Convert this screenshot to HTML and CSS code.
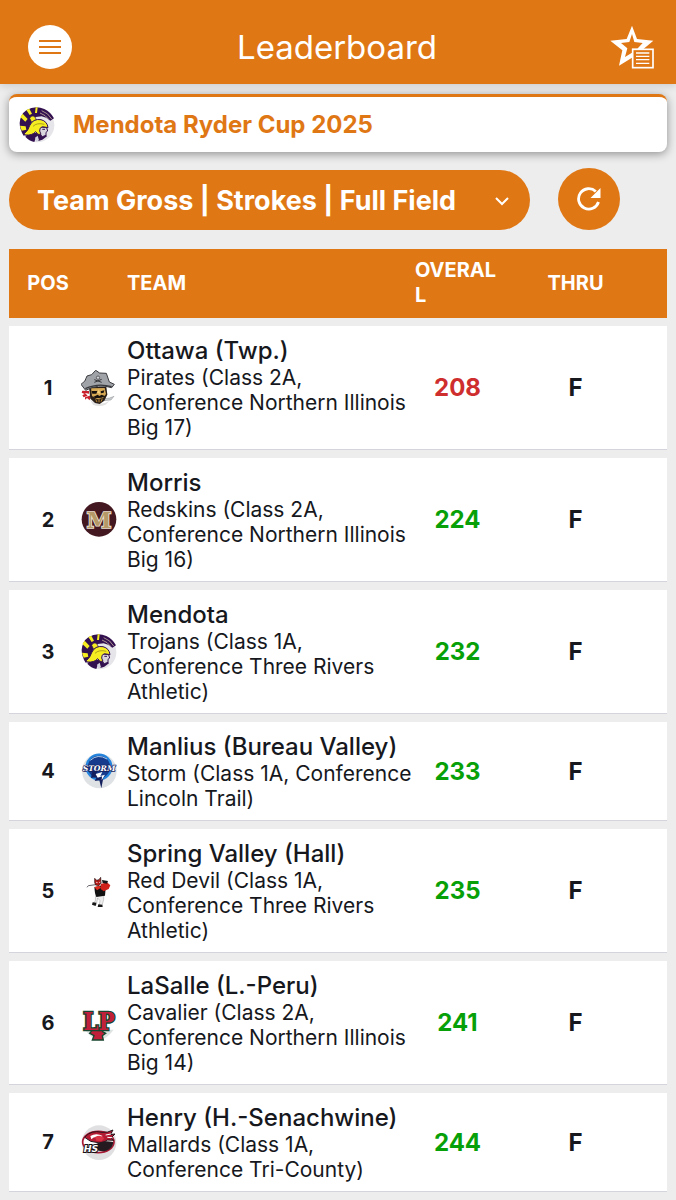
FILE: index.html
```html
<!DOCTYPE html>
<html lang="en">

<head>
    <meta charset="UTF-8">
    <meta name="viewport" content="width=device-width, initial-scale=1.0">
    <title>Leaderboard</title>
    <link rel="stylesheet" href="styles.css">
</head>

<body>
    <!-- shared team logo -->
    <svg class="defs" width="0" height="0" aria-hidden="true">
        <symbol id="trojan" viewBox="36 36 108 108">
            <circle cx="91" cy="91" r="51" fill="#e6e5ea" />
            <path d="M38 84 Q40 58 58 46 Q84 30 112 42 Q132 52 141 70 L130 77 Q118 66 104 64 L86 66 L70 88 L62 118 L50 122 Q38 104 38 84Z" fill="#33104f" />
            <path d="M40 66 L55 80 L62 72 L47 56Z M58 45 L68 60 L75 56 L67 41Z M86 37 L84 54 L90 54 L92 37Z M39 92 L56 94 L58 104 L44 107Z" fill="#f6ee20" />
            <path d="M104 47 Q124 54 134 72 M99 54 Q116 60 125 73" fill="none" stroke="#e8d9b0" stroke-width="2" />
            <path d="M68 70 q6 -12 16 -4 l4 8 l-14 8Z" fill="#f6ee20" stroke="#33104f" stroke-width="2" />
            <path d="M56 124 L66 114 L84 114 L96 110 L112 112 L120 124 L106 134 L94 138 L86 130 L82 141 Q66 138 56 126Z" fill="#33104f" />
            <path d="M92 102 L100 96 L119 98 L122 108 L117 112 L117 121 L106 125 L98 116Z" fill="#d9d5df" stroke="#33104f" stroke-width="3" />
            <path d="M106 103 L114 103" stroke="#33104f" stroke-width="3" />
            <path d="M52 116 Q64 106 68 92 Q78 70 102 74 Q121 79 123 98 L106 95 Q97 98 98 108 L102 118 Q92 122 86 110 Q76 122 54 120Z" fill="#f6ee20" stroke="#33104f" stroke-width="3" />
            <path d="M78 94 Q90 82 112 88" fill="none" stroke="#8b7a1b" stroke-width="2" />
            <path d="M84 128 L92 122 L96 136 L88 140Z" fill="#d4d2dc" />
        </symbol>
    </svg>

    <header class="topbar">
        <button type="button" class="menu-btn" aria-label="Menu">
            <svg viewBox="0 0 22 16" width="22" height="16">
                <path d="M0 2h22M0 8h22M0 14h22" stroke="#e07715" stroke-width="2" />
            </svg>
        </button>
        <h1>Leaderboard</h1>
        <button type="button" class="fav-btn" aria-label="Favorites">
            <svg viewBox="822 74 132 132" width="44" height="44">
                <path d="M888 76 L903 116 L952 121 L916 151 L888 172 L849 196 L859 150 L823 121 L872 116Z M888 101 L880 125 L855 128 L874 144 L867 170 L888 157 L888 145 L904 145 L920 128 L895 125Z" fill="#fff" fill-rule="evenodd" />
                <rect x="890" y="147" width="61" height="55" fill="#e07715" stroke="#fff" stroke-width="5" />
                <path d="M900 158h40M900 168h40M900 178h40M900 189h40" stroke="#fff" stroke-width="4" />
            </svg>
        </button>
    </header>

    <main>
        <section class="event">
            <svg class="logo" viewBox="0 0 36 36"><use href="#trojan" /></svg>
            <h2>Mendota Ryder Cup 2025</h2>
        </section>

        <div class="filters">
            <div class="select-wrap">
                <select id="view" aria-label="Leaderboard view">
                    <option>Team Gross | Strokes | Full Field</option>
                </select>
                <svg class="chevron" viewBox="0 0 14 10" width="14" height="10">
                    <path d="M1 2l6 6 6-6" fill="none" stroke="#fff" stroke-width="2" />
                </svg>
            </div>
            <button type="button" class="refresh-btn" aria-label="Refresh">
                <svg viewBox="0 0 24 24" width="24" height="24">
                    <path d="M21.5 15 A10.2 10.2 0 1 1 18.8 4.5" fill="none" stroke="#fff" stroke-width="2.8" />
                    <path d="M23.5 1 V11 H13.5Z" fill="#fff" />
                </svg>
            </button>
        </div>

        <table class="board">
            <thead>
                <tr>
                    <th class="pos">POS</th>
                    <th class="team-logo"></th>
                    <th class="team">TEAM</th>
                    <th class="overall">OVERALL</th>
                    <th class="thru">THRU</th>
                </tr>
            </thead>
            <tbody>
                <tr>
                    <td class="pos">1</td>
                    <td class="team-logo">
                        <svg class="logo" viewBox="36 30 108 108">
                            <path d="M62 118 Q90 142 122 122 L110 134 Q90 142 72 134Z" fill="#e2e2e2" />
                            <path d="M40 92 L60 93 L60 101 L48 99 L56 107 L44 112 L40 106 L47 102 L38 98Z M48 112 L66 106 L62 121 L54 114 L48 119Z" fill="#c9202c" />
                            <path d="M104 116 Q122 116 135 109 L126 120 L106 122Z" fill="#c9cdd0" stroke="#6a6d70" stroke-width="1" />
                            <path d="M60 82 L112 80 L115 104 L106 122 L92 132 L78 129 L64 116Z" fill="#2a2019" />
                            <path d="M66 85 L107 84 L111 102 L102 114 L84 118 L69 108Z" fill="#d6a955" />
                            <path d="M68 93 L85 93 L82 101 L70 101Z M95 94 L106 91 L104 98 L96 100Z M72 111 L86 104 L91 108 L98 104 L109 109 L98 113 L80 115Z" fill="#17110e" />
                            <path d="M84 98 L90 88 L94 102Z" fill="#f2d07e" />
                            <path d="M80 118 l4 8 M90 117 v10 M100 116 l-4 9" stroke="#b5822f" stroke-width="3" />
                            <path d="M36 73 Q50 66 54 48 L68 44 L80 31 L92 39 L112 40 L121 66 L136 73 L128 83 Q88 70 50 91Z" fill="#a0a3a8" stroke="#3a3b40" stroke-width="3" />
                            <path d="M49 86 Q86 68 128 80" fill="none" stroke="#38393d" stroke-width="4" />
                            <path d="M76 59 L98 67 M98 58 L76 67" stroke="#35363a" stroke-width="3" />
                            <circle cx="87" cy="53" r="5" fill="#d2d4d8" stroke="#35363a" stroke-width="2" />
                        </svg>
                    </td>
                    <td class="team">
                        <div class="name">Ottawa (Twp.)</div>
                        <div class="info">Pirates (Class 2A, Conference Northern Illinois Big 17)</div>
                    </td>
                    <td class="overall under">208</td>
                    <td class="thru">F</td>
                </tr>
                <tr>
                    <td class="pos">2</td>
                    <td class="team-logo">
                        <svg class="logo" viewBox="36 36 108 108">
                            <circle cx="90" cy="88" r="52" fill="#431820" />
                            <text class="mark mark-m" x="90" y="113">M</text>
                        </svg>
                    </td>
                    <td class="team">
                        <div class="name">Morris</div>
                        <div class="info">Redskins (Class 2A, Conference Northern Illinois Big 16)</div>
                    </td>
                    <td class="overall">224</td>
                    <td class="thru">F</td>
                </tr>
                <tr>
                    <td class="pos">3</td>
                    <td class="team-logo"><svg class="logo" viewBox="0 0 36 36"><use href="#trojan" /></svg></td>
                    <td class="team">
                        <div class="name">Mendota</div>
                        <div class="info">Trojans (Class 1A, Conference Three Rivers Athletic)</div>
                    </td>
                    <td class="overall">232</td>
                    <td class="thru">F</td>
                </tr>
                <tr>
                    <td class="pos">4</td>
                    <td class="team-logo">
                        <svg class="logo" viewBox="36 34 108 108">
                            <circle cx="91" cy="88" r="52" fill="#dfe2e5" />
                            <circle cx="90" cy="76" r="37" fill="#163b8c" stroke="#2584dc" stroke-width="7" />
                            <path d="M64 56 Q86 35 114 52" fill="none" stroke="#a9c8e8" stroke-width="3" />
                            <path d="M70 88 L88 86 L80 98 L97 95 L88 108 L104 104 L97 140 L91 116 L77 118 L84 106 L66 109Z" fill="#15205e" />
                            <path d="M80 97 L100 91 L94 103 L108 99 L98 116 L99 104 L86 108Z" fill="#fff" />
                            <text class="mark mark-storm" x="90" y="87">STORM</text>
                        </svg>
                    </td>
                    <td class="team">
                        <div class="name">Manlius (Bureau Valley)</div>
                        <div class="info">Storm (Class 1A, Conference Lincoln Trail)</div>
                    </td>
                    <td class="overall">233</td>
                    <td class="thru">F</td>
                </tr>
                <tr>
                    <td class="pos">5</td>
                    <td class="team-logo">
                        <svg class="logo" viewBox="36 36 108 108">
                            <path d="M54 79 L58 74 L80 71 L98 66" fill="none" stroke="#68646a" stroke-width="3" />
                            <path d="M80 98 L104 98 L104 116 L99 134 L90 136 L93 119 L86 111 L82 131 L71 131 L79 119Z" fill="#eee" stroke="#777" stroke-width="1" />
                            <path d="M76 79 L100 73 L110 80 L108 104 L82 108 L78 96Z" fill="#111" />
                            <path d="M95 69 L114 64 L124 73 L119 84 L104 91 L95 84Z" fill="#cf2119" />
                            <path d="M77 52 L83 58 L90 56 L95 49 L96 64 L90 74 L80 72 L77 65Z" fill="#b41c19" stroke="#231313" stroke-width="2" />
                            <path d="M76 78 L91 74 L96 80 L84 88Z" fill="#df2c20" />
                            <path d="M99 57 L117 60 L114 68 L101 66Z" fill="#161616" />
                            <path d="M81 64 L86 65 M90 65 L94 63" stroke="#fff" stroke-width="2" />
                            <path d="M71 124 L82 125 L80 135 L69 131Z M88 130 L100 131 L101 138 L86 138Z" fill="#161616" />
                        </svg>
                    </td>
                    <td class="team">
                        <div class="name">Spring Valley (Hall)</div>
                        <div class="info">Red Devil (Class 1A, Conference Three Rivers Athletic)</div>
                    </td>
                    <td class="overall">235</td>
                    <td class="thru">F</td>
                </tr>
                <tr>
                    <td class="pos">6</td>
                    <td class="team-logo">
                        <svg class="logo" viewBox="36 36 108 108">
                            <path d="M48 110 Q90 170 134 110Z" fill="#dfe4e2" />
                            <path d="M76 104 L108 104 L101 116 L110 121 L100 128 L103 141 L70 141 L75 128 L62 121Z" fill="#c11f3a" stroke="#17452f" stroke-width="4" />
                            <text class="mark mark-lp" x="90" y="112">LP</text>
                        </svg>
                    </td>
                    <td class="team">
                        <div class="name">LaSalle (L.-Peru)</div>
                        <div class="info">Cavalier (Class 2A, Conference Northern Illinois Big 14)</div>
                    </td>
                    <td class="overall">241</td>
                    <td class="thru">F</td>
                </tr>
                <tr>
                    <td class="pos">7</td>
                    <td class="team-logo">
                        <svg class="logo" viewBox="36 36 108 108">
                            <circle cx="90" cy="92" r="52" fill="#e0e0e2" />
                            <ellipse cx="88" cy="90" rx="47" ry="32" fill="#fff" stroke="#a81934" stroke-width="5" />
                            <path d="M47 76 Q66 53 99 61 Q116 63 132 54 L124 68 L138 66 L126 78 L134 85 L116 84 L98 94 L65 88Z" fill="#b51a33" stroke="#26151c" stroke-width="3" />
                            <path d="M64 72 Q82 61 101 72 L92 78 Q78 71 67 82Z" fill="#fff" />
                            <path d="M78 75 Q95 66 106 79 L98 88 L82 86Z" fill="#d83445" />
                            <path d="M77 99 Q98 82 133 90 Q132 109 112 116 Q94 121 80 112Z" fill="#241a20" />
                            <path d="M110 69 L126 66 M115 76 L130 77" stroke="#fff" stroke-width="3" />
                            <text class="mark mark-hs" x="66" y="120">HS</text>
                        </svg>
                    </td>
                    <td class="team">
                        <div class="name">Henry (H.-Senachwine)</div>
                        <div class="info">Mallards (Class 1A, Conference Tri-County)</div>
                    </td>
                    <td class="overall">244</td>
                    <td class="thru">F</td>
                </tr>
            </tbody>
        </table>
    </main>
</body>

</html>
```
FILE: styles.css
```css
* {
    box-sizing: border-box;
}

body {
    font-family: Inter, "Liberation Sans", sans-serif;
    margin: 0;
    background-color: #ededed;
    color: #16181d;
}

button {
    display: flex;
    justify-content: center;
    align-items: center;
    padding: 0;
    border: none;
    background: none;
    cursor: pointer;
}

.defs {
    display: block;
}

/* top bar */
.topbar {
    display: flex;
    justify-content: space-between;
    align-items: center;
    height: 84px;
    padding: 9px 22px 0 28px;
    background-color: #e07715;
    color: #fff;
    box-shadow: 0 2px 8px rgba(0, 0, 0, 0.15);
}

.topbar h1 {
    flex: 1;
    margin: 0;
    padding-right: 8px;
    font-size: 33px;
    line-height: 40px;
    font-weight: 400;
    text-align: center;
}

.menu-btn {
    width: 44px;
    height: 44px;
    border-radius: 50%;
    background-color: #fff;
}

main {
    padding: 10px 9px 0;
}

.logo {
    display: block;
    width: 36px;
    height: 36px;
}

/* event card */
.event {
    display: flex;
    align-items: center;
    gap: 18px;
    height: 58px;
    padding: 0 10px;
    border-top: 3px solid #e07715;
    border-radius: 8px;
    background: #fff;
    box-shadow: 0 2px 10px rgba(0, 0, 0, 0.4);
}

.event h2 {
    margin: 0;
    font-size: 24px;
    line-height: 30px;
    color: #e07715;
}

/* filters */
.filters {
    display: flex;
    align-items: flex-end;
    gap: 28px;
    margin-top: 16px;
}

.select-wrap {
    position: relative;
    flex: 0 1 521px;
}

.select-wrap select {
    display: block;
    width: 100%;
    height: 60px;
    padding: 0 48px 0 28px;
    border: none;
    border-radius: 30px;
    appearance: none;
    background-color: #e07715;
    color: #fff;
    font-family: inherit;
    font-size: 27px;
    font-weight: bold;
}

.chevron {
    position: absolute;
    top: 26px;
    right: 21px;
    pointer-events: none;
}

.refresh-btn {
    flex: none;
    width: 62px;
    height: 62px;
    border-radius: 50%;
    background-color: #e07715;
}

/* leaderboard */
.board {
    width: 100%;
    margin-top: 11px;
    border-spacing: 0 8px;
    table-layout: fixed;
}

.board th {
    padding: 9px 0 10px;
    background-color: #e07715;
    color: #fff;
    font-size: 20px;
    line-height: 25px;
    text-align: left;
}

.board td {
    padding: 9px 0;
    border-bottom: 1px solid #d3d4dc;
    background-color: #fff;
}

.board td.team {
    padding-top: 11px;
}

.board .pos {
    width: 72px;
    padding-left: 6px;
    font-size: 20px;
    font-weight: bold;
    text-align: center;
}

.board .team-logo {
    width: 46px;
}

.board .overall {
    width: 85px;
    word-break: break-all;
}

.board .thru {
    width: 167px;
    padding-right: 16px;
    text-align: center;
}

.board td.overall,
.board td.thru {
    font-size: 24px;
    font-weight: bold;
    text-align: center;
}

.board td.overall {
    color: #08a008;
}

.board td.under {
    color: #cf2e2e;
}

.name {
    font-size: 24px;
    line-height: 28px;
    font-weight: 500;
}

.info {
    font-size: 21px;
    line-height: 25px;
}

/* lettering in the team logos */
.mark {
    font-family: "DejaVu Serif", serif;
    font-weight: bold;
    text-anchor: middle;
    paint-order: stroke;
}

.mark-m {
    font-size: 68px;
    fill: #b59a68;
    stroke: #f0e4d4;
    stroke-width: 5px;
}

.mark-storm {
    font-size: 23px;
    font-style: italic;
    fill: #fff;
    stroke: #15205e;
    stroke-width: 4px;
}

.mark-lp {
    font-family: "DejaVu Serif Condensed", "DejaVu Serif", serif;
    font-size: 72px;
    fill: #c11f3a;
    stroke: #17452f;
    stroke-width: 8px;
}

.mark-hs {
    font-family: "DejaVu Sans", sans-serif;
    font-size: 28px;
    font-style: italic;
    fill: #fff;
    stroke: #181216;
    stroke-width: 6px;
}
```
